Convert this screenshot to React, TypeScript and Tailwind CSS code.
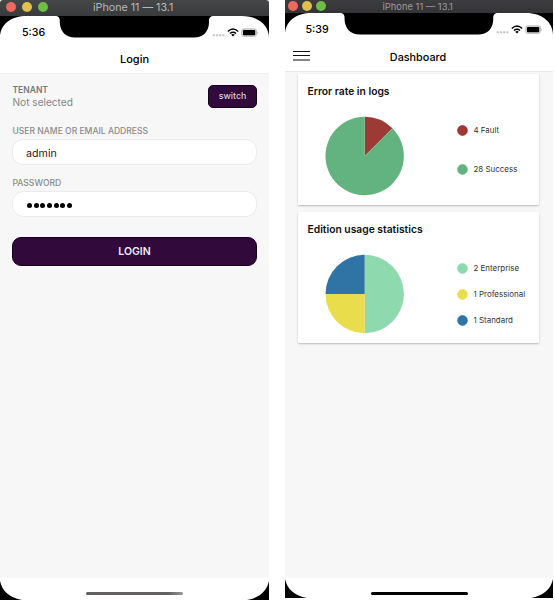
import type { ReactNode } from "react";

function TitleBar({ className, dots }: { className: string; dots: string }) {
  return (
    <div className={`flex shrink-0 items-start bg-linear-to-b ${className}`}>
      <div className={`flex shrink-0 ${dots}`}>
        <span className="size-[10px] rounded-full bg-[#ee6a5f]" />
        <span className="size-[10px] rounded-full bg-[#e0bf4c]" />
        <span className="size-[10px] rounded-full bg-[#6cbe45]" />
      </div>
      <span className="whitespace-nowrap">iPhone 11 — 13.1</span>
    </div>
  );
}

function StatusBar({ time, className, timeClass, iconClass }: { time: string; className: string; timeClass: string; iconClass: string }) {
  return (
    <div className={`relative shrink-0 ${className}`}>
      <svg className="absolute inset-x-0 top-0 h-[22px] w-full" viewBox="0 0 269 22" preserveAspectRatio="none">
        <path d="M0 0H27C11 0 0 8 0 22ZM55 0C58.5 0 59.8 1.5 59.8 5V7C60.5 16 66 21.5 75 21.5H194C203 21.5 208.5 16 209 7V5C209 1.5 210.5 0 214 0ZM242 0H269V22C269 9 258 0 242 0Z" fill="#000" />
      </svg>
      <div className="relative flex justify-between pl-[22px] pr-[10px]">
        <span className={`text-[10.7px] leading-[14px] font-medium ${timeClass}`}>{time}</span>
        <svg className={`h-[10px] w-[47px] ${iconClass}`} viewBox="0 0 47 10" fill="none">
          <g fill="#c4c4c4">
            <rect x=".7" y="6.2" width="2.2" height="2" rx=".5" />
            <rect x="3.9" y="6.2" width="2.2" height="2" rx=".5" />
            <rect x="7.1" y="6.2" width="2.2" height="2" rx=".5" />
            <rect x="10.3" y="6.2" width="2.2" height="2" rx=".5" />
          </g>
          <path d="M15.8 3.4Q21 -1.2 26.2 3.4M17.9 5.5Q21 2.9 24.1 5.5" stroke="#000" strokeWidth="1.4" />
          <path d="M19.2 6.7Q21 5.3 22.8 6.7L21 8.5Z" fill="#000" />
          <rect x="29.8" y=".9" width="14.6" height="7.4" rx="1.8" fill="#ddd" stroke="#b0b0b0" strokeWidth=".9" />
          <rect x="31" y="2" width="12.2" height="5.2" rx=".8" fill="#000" />
          <path d="M45.2 3.4Q46.8 4.6 45.2 5.8Z" fill="#999" />
        </svg>
      </div>
    </div>
  );
}

function HomeBar({ className, bar }: { className: string; bar: string }) {
  return (
    <div className={`relative flex shrink-0 justify-center bg-white ${className}`}>
      <svg className="absolute inset-x-0 bottom-0 h-[19px] w-full" viewBox="0 0 269 19" preserveAspectRatio="none">
        <path d="M0 0C2 10 10 17 22 19H0ZM269 0V19H247C259 17 267 10 269 0Z" fill="#000" />
      </svg>
      <div className={`relative h-[3px] w-[97px] rounded-full ${bar}`} />
    </div>
  );
}

type Slice = { label: string; color: string; edge: string; path: string };

function ChartCard({ title, slices, legend }: { title: string; slices: Slice[]; legend: string }) {
  return (
    <section className="h-[131px] rounded-[1px] bg-white px-[9.5px] pt-[10px] shadow-[0_1px_2px_rgba(0,0,0,0.25)]">
      <h2 className="text-[10.3px] leading-[15px] font-semibold text-[#111]">{title}</h2>
      <div className="flex">
        <svg className="mt-[17px] ml-[17.5px] h-[80px] w-[80px] shrink-0" viewBox="-39.7 -40 80 80">
          {slices.map((s) => (
            <path key={s.label} d={s.path} fill={s.color} />
          ))}
        </svg>
        <ul className={`ml-[52px] flex flex-col ${legend}`}>
          {slices.map((s) => (
            <li key={s.label} className="flex h-[12px] items-center gap-[5.5px] text-[7.95px] whitespace-nowrap text-[#333]">
              <svg className="size-[11px]" viewBox="0 0 11 11">
                <circle cx="5.5" cy="5.5" r="4.9" fill={s.color} stroke={s.edge} strokeWidth=".6" />
              </svg>
              <span className="pt-px">{s.label}</span>
            </li>
          ))}
        </ul>
      </div>
    </section>
  );
}

const logs: Slice[] = [
  { label: "4 Fault", color: "#9d3a36", edge: "#960b0b", path: "M0 0V-39.2A39.2 39.2 0 0 1 27.7 -27.7Z" },
  { label: "28 Success", color: "#63b381", edge: "#58b17c", path: "M0 0L27.7 -27.7A39.2 39.2 0 1 1 0 -39.2Z" },
];

const editions: Slice[] = [
  { label: "2 Enterprise", color: "#8fd9ae", edge: "#83d6a7", path: "M0 0V-39.2A39.2 39.2 0 0 1 0 39.2Z" },
  { label: "1 Professional", color: "#e9dd4b", edge: "#e6da39", path: "M0 0V39.2A39.2 39.2 0 0 1 -39.2 0Z" },
  { label: "1 Standard", color: "#3074a6", edge: "#1769a3", path: "M0 0H-39.2A39.2 39.2 0 0 1 0 -39.2Z" },
];

function Field({ label, children }: { label: string; children: ReactNode }) {
  return (
    <label className="block">
      <span className="block h-[14px] pl-[.5px] text-[8.55px] leading-[12px] font-medium text-[#8b8b8b]">{label}</span>
      <span className="flex h-[26px] items-center rounded-[11px] border border-[#ebebeb] bg-white pt-[3px] pl-[13px] text-[10.7px] text-[#222]">
        {children}
      </span>
    </label>
  );
}

function LoginPhone() {
  return (
    <div className="flex h-[600px] w-[269px] flex-col overflow-hidden bg-white">
      <TitleBar
        className="h-[16px] rounded-t-[3px] from-[#454748] to-[#383a3b] text-[10.7px] leading-[15px] text-[#b7b8b8]"
        dots="w-[93px] gap-[6px] pl-[6px] pt-[2px]"
      />
      <StatusBar time="5:36" className="h-[34px]" timeClass="mt-[10px]" iconClass="mt-[12px]" />
      <h1 className="h-[23px] shrink-0 text-center text-[11px] leading-[19px] font-medium">Login</h1>
      <main className="flex-1 border-t border-[#f0f0f0] bg-[#f7f7f7] px-[12px] pt-[10px]">
        <div className="flex h-[41px] items-start justify-between">
          <div className="pl-[.5px]">
            <div className="text-[8.5px] leading-[12px] font-semibold text-[#777]">TENANT</div>
            <div className="text-[10.1px] leading-[12px] text-[#868686]">Not selected</div>
          </div>
          <button className="mt-px h-[23px] w-[49px] rounded-[5px] border border-[#16011c] bg-[#32093b] pb-px text-[8.8px] font-medium text-[#d8cfda]">switch</button>
        </div>
        <div className="flex flex-col gap-[12px]">
          <Field label="USER NAME OR EMAIL ADDRESS">
            <span className="pt-px">admin</span>
          </Field>
          <Field label="PASSWORD">
            <span className="flex gap-[1.7px] pl-px">
              {[0, 1, 2, 3, 4, 5, 6].map((i) => (
                <span key={i} className="size-[5px] rounded-full bg-black" />
              ))}
            </span>
          </Field>
        </div>
        <button className="mt-[20px] block h-[29px] w-[245px] rounded-[9px] border border-[#16011c] bg-[#32093b] text-[10.5px] font-semibold text-[#f1edf2]">LOGIN</button>
      </main>
      <HomeBar className="h-[22px] pt-[14px]" bar="bg-linear-to-r from-[#625f60] from-85% to-[#999]" />
    </div>
  );
}

function DashboardPhone() {
  return (
    <div className="flex h-[598px] w-[268px] flex-col overflow-hidden bg-white">
      <TitleBar
        className="h-[13px] from-[#3d3d40] to-[#343438] text-[9.4px] leading-[13px] text-[#9b9b9e]"
        dots="w-[97.5px] gap-[4px] pl-[3px] pt-[1px]"
      />
      <StatusBar time="5:39" className="h-[34px]" timeClass="mt-[10px] -ml-[1.5px]" iconClass="mt-[12px]" />
      <header className="grid h-[24px] shrink-0 grid-cols-[1fr_auto_1fr] pl-[8px] pr-[10px]">
        <svg className="mt-[3px] h-[12px] w-[17px]" viewBox="0 0 17 12">
          <path d="M0 1.5H17M0 5.5H17" stroke="#111" strokeWidth="1.2" />
          <path d="M0 10H17" stroke="#666" strokeWidth="1.6" />
        </svg>
        <h1 className="text-[10.8px] leading-[21px] font-medium">Dashboard</h1>
      </header>
      <main className="flex flex-1 flex-col gap-[7px] border-t border-[#e8e8e8] bg-[#f7f7f7] pt-[2px] pr-[14px] pl-[13px]">
        <ChartCard title="Error rate in logs" slices={logs} legend="pt-[25px] gap-[27px]" />
        <ChartCard title="Edition usage statistics" slices={editions} legend="pt-[25px] gap-[14px]" />
      </main>
      <HomeBar className="h-[20px] pt-[14px]" bar="bg-black" />
    </div>
  );
}

export default function App() {
  return (
    <div className="flex h-[600px] w-[555px] items-start gap-[16px] overflow-hidden bg-white font-['Inter','Liberation_Sans',sans-serif] text-black">
      <LoginPhone />
      <DashboardPhone />
    </div>
  );
}
